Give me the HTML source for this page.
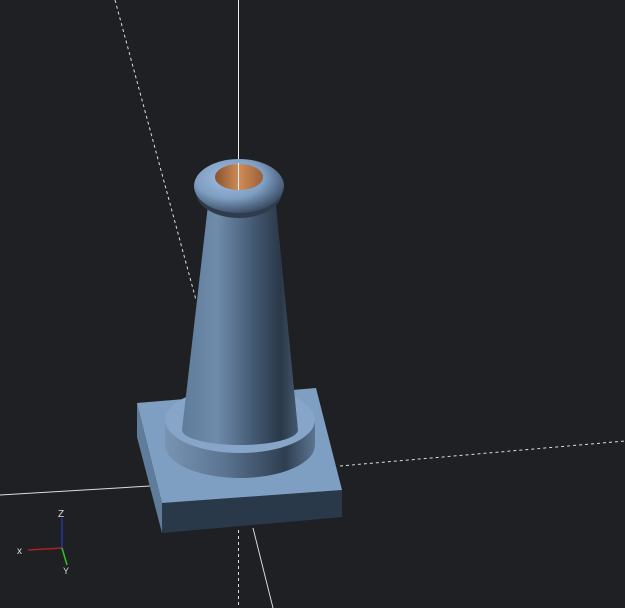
<!DOCTYPE html>
<html><head><style>
html,body{margin:0;padding:0;background:#1f2023;}
svg{display:block}
</style></head><body>
<svg width="625" height="608" viewBox="0 0 625 608" xmlns="http://www.w3.org/2000/svg">
<defs>
<linearGradient id="cone" x1="0" x2="1" y1="0" y2="0">
<stop offset="0" stop-color="#5f7b9a"/>
<stop offset="0.3" stop-color="#6f8cab"/>
<stop offset="0.6" stop-color="#465c76"/>
<stop offset="0.85" stop-color="#2a3848"/>
<stop offset="1" stop-color="#44596f"/>
</linearGradient>
<linearGradient id="ring" x1="0" x2="1" y1="0" y2="0">
<stop offset="0" stop-color="#7894b3"/>
<stop offset="0.4" stop-color="#5a7491"/>
<stop offset="0.8" stop-color="#2f3e50"/>
<stop offset="1" stop-color="#5b7590"/>
</linearGradient>
<radialGradient id="torus" cx="0.4" cy="0.35" r="0.7">
<stop offset="0" stop-color="#a3c1e3"/>
<stop offset="0.55" stop-color="#7e9ec2"/>
<stop offset="1" stop-color="#33435a"/>
</radialGradient>
<linearGradient id="hole" x1="0" x2="1" y1="0" y2="0">
<stop offset="0" stop-color="#8a5230"/>
<stop offset="0.5" stop-color="#d08c58"/>
<stop offset="1" stop-color="#9a6038"/>
</linearGradient>
</defs>
<line x1="115" y1="0" x2="196" y2="300" stroke="#ddd" stroke-width="1" stroke-dasharray="3,3"/>
<line x1="0" y1="495" x2="150" y2="486" stroke="#ddd" stroke-width="1"/>
<line x1="340" y1="466" x2="625" y2="441" stroke="#ddd" stroke-width="1" stroke-dasharray="3,3"/>
<line x1="238.5" y1="0" x2="238.5" y2="470" stroke="#eee" stroke-width="1"/>
<line x1="238.5" y1="530" x2="238.5" y2="608" stroke="#ddd" stroke-width="1" stroke-dasharray="3,3"/>
<line x1="253" y1="528" x2="273" y2="608" stroke="#ddd" stroke-width="1"/>
<polygon points="137,403 162,503 162,533 137,437" fill="#5f7c9a"/>
<polygon points="162,503 342,490 342,517 162,533" fill="#2a394a"/>
<polygon points="137,403 316,388 342,490 162,503" fill="#7f9fc2"/>
<path d="M165,420 L165,445 A75,33 0 0 0 315,445 L315,420 Z" fill="url(#ring)"/>
<ellipse cx="240" cy="420" rx="75" ry="33" fill="#86a5c8"/>
<path d="M208,205 L182,430 A58,15 0 0 0 298,430 L276,205 Z" fill="url(#cone)"/>
<ellipse cx="239" cy="192" rx="43" ry="26" fill="#2e3c4e"/>
<ellipse cx="239" cy="186" rx="45" ry="27" fill="url(#torus)"/>
<ellipse cx="239" cy="177" rx="24" ry="13" fill="url(#hole)"/>
<line x1="238.5" y1="163" x2="238.5" y2="190" stroke="#eee" stroke-width="1"/>
<line x1="62" y1="548" x2="62" y2="518" stroke="#2233aa" stroke-width="1.5"/>
<line x1="62" y1="548" x2="28" y2="550" stroke="#b02020" stroke-width="1.5"/>
<line x1="62" y1="548" x2="67" y2="565" stroke="#30c030" stroke-width="1.5"/>
<text x="58" y="517" fill="#ddd" font-family="Liberation Sans, sans-serif" font-size="10">Z</text>
<text x="17" y="554" fill="#ddd" font-family="Liberation Sans, sans-serif" font-size="10">x</text>
<text x="63" y="574" fill="#ddd" font-family="Liberation Sans, sans-serif" font-size="9">Y</text>
</svg>
</body></html>
